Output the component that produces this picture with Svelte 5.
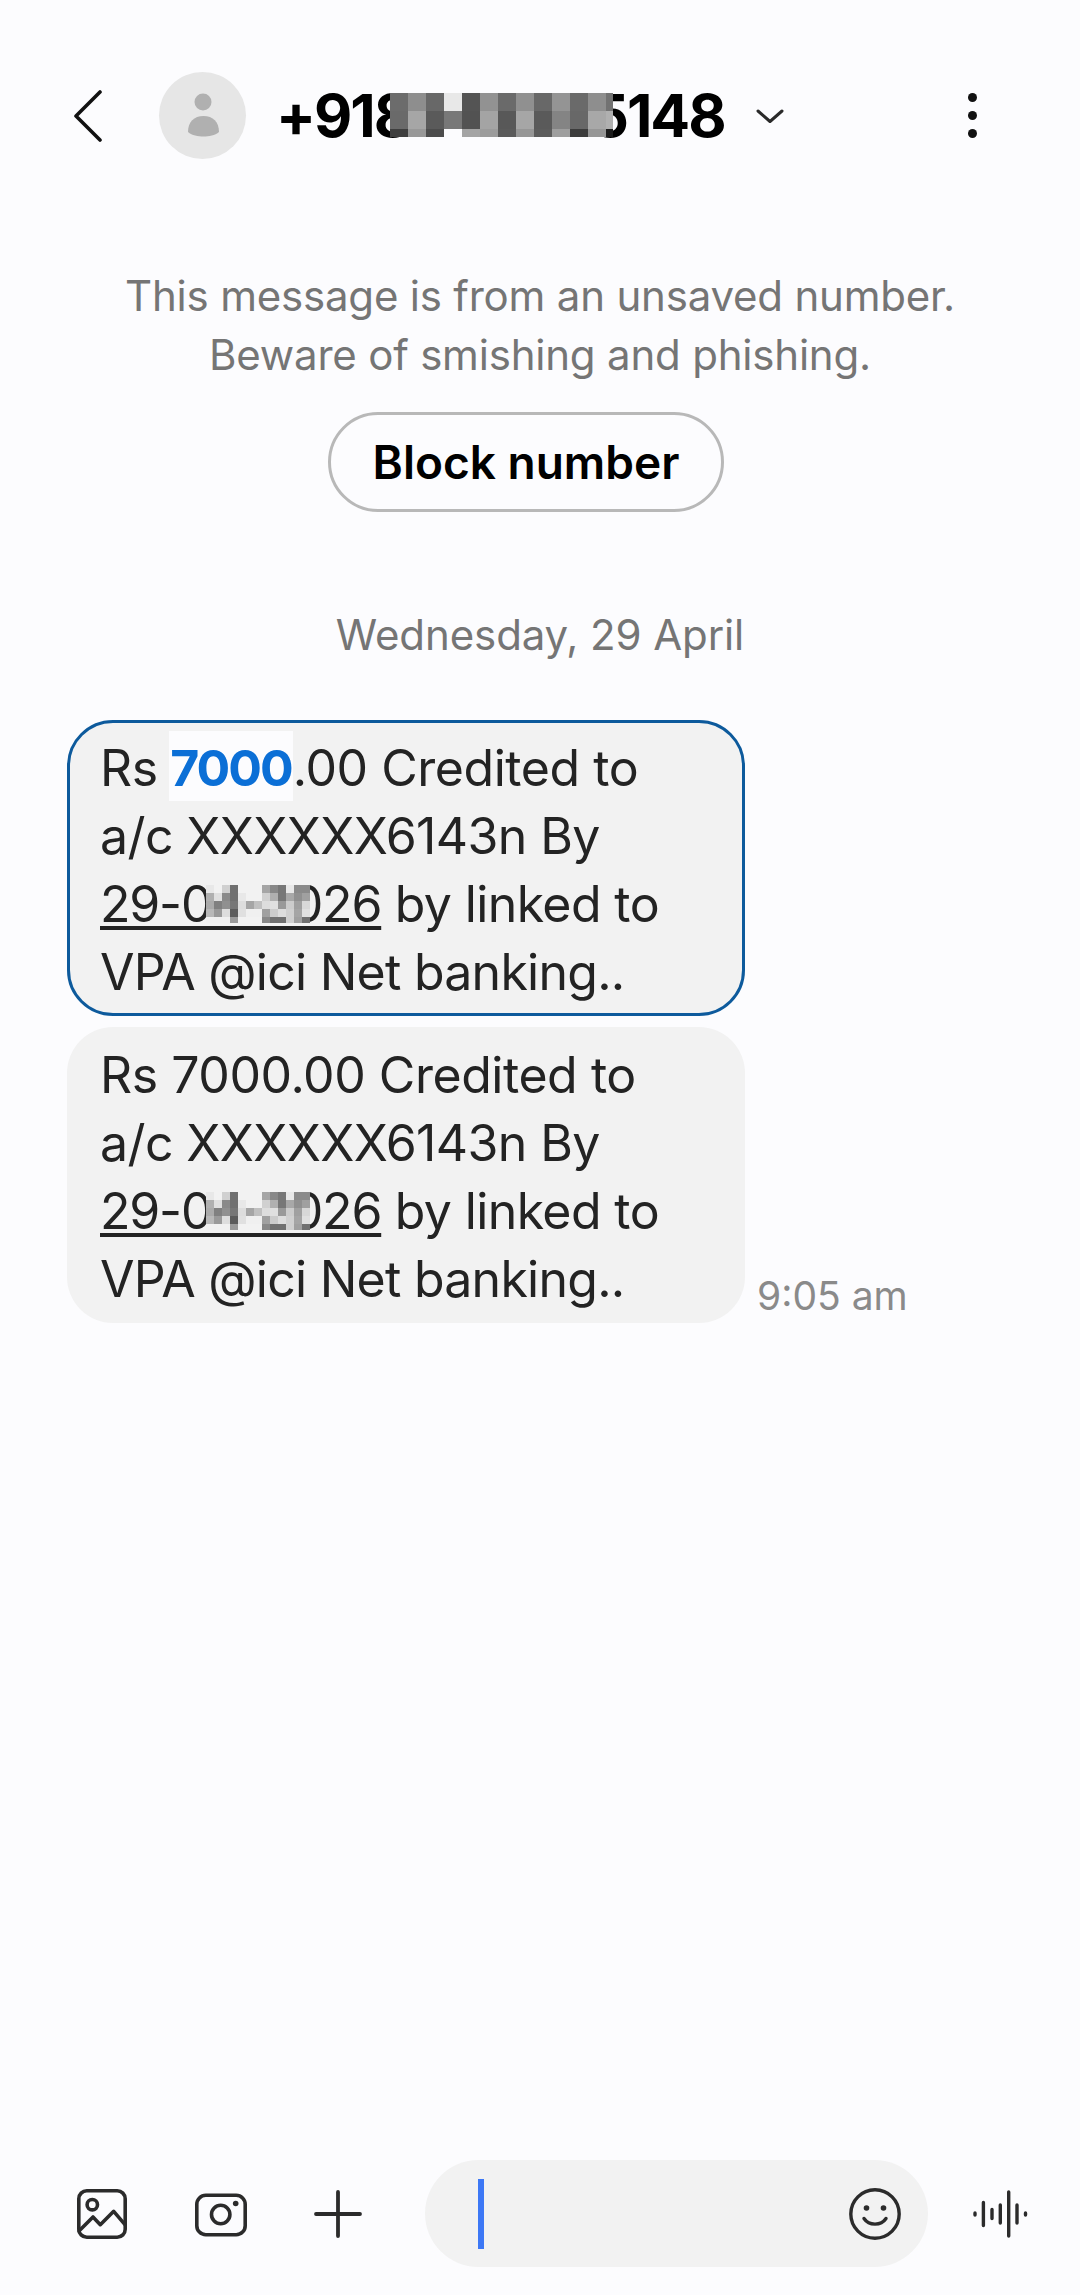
<script lang="ts">
  // greyscale pixelation blocks, one string per row
  const titleCells = [
    ['#6c6c6c', '#8e8e8e', '#686868', '#e8e8e8', '#545454', '#929292', '#6a6a6a', '#909090', '#686868', '#949494', '#6a6a6a', '#8e8e8e', '#727272'],
    ['#6a6a6a', '#a6a6a6', '#5a5a5a', '#787878', '#525252', '#a4a4a4', '#585858', '#a6a6a6', '#5a5a5a', '#848484', '#686868', '#a8a8a8', '#b0b0b0'],
    ['#3e3e3e', '#989898', '#4c4c4c', '#fcfcfe', '#a4a4a4', '#9c9c9c', '#5a5a5a', '#969696', '#5c5c5c', '#9e9e9e', '#3c3c3c', '#969696', '#1c1c1c'],
  ];

  const dateCells = [
    ['#e8e8e8', '#f2f2f2', '#d0d0d0', '#707070', '#f2f2f2', '#f2f2f2', '#f2f2f2', '#a5a5a5', '#888888', '#777777', '#e8e8e8', '#8a8a8a', '#8a8a8a'],
    ['#b0b0b0', '#e0e0e0', '#8a8a8a', '#707070', '#e8e8e8', '#f2f2f2', '#f2f2f2', '#d0d0d0', '#b0b0b0', '#777777', '#a8a8a8', '#909090', '#a0a0a0'],
    ['#aaaaaa', '#808080', '#909090', '#777777', '#dddddd', '#a5a5a5', '#c0c0c0', '#dddddd', '#e0e0e0', '#999999', '#cccccc', '#a0a0a0', '#d8d8d8'],
    ['#b8b8b8', '#999999', '#dddddd', '#5c5c5c', '#e0e0e0', '#f0f0f0', '#f0f0f0', '#a0a0a0', '#cccccc', '#dddddd', '#d0d0d0', '#a5a5a5', '#e0e0e0'],
    ['#f0f0f0', '#f0f0f0', '#f0f0f0', '#9a9a9a', '#f2f2f2', '#f2f2f2', '#f2f2f2', '#888888', '#707070', '#707070', '#d0d0d0', '#a0a0a0', '#707070'],
  ];

  const messages = [{ selected: true }, { selected: false }];
</script>

<div class="screen">
  <header class="topbar">
    <svg class="back" width="29" height="52" viewBox="0 0 29 52" fill="none" stroke="#111" stroke-width="3.6" stroke-linecap="round" stroke-linejoin="round">
      <path d="M27 2 L3 26 L27 50" />
    </svg>
    <div class="avatar">
      <svg width="87" height="87" viewBox="0 0 87 87">
        <circle cx="44" cy="30" r="8.5" fill="#b0b0b0" />
        <path d="M29 60 C29 50 35 44 44.500 44 C54 44 60 50 60 60 C56 63.500 50 64.500 44.500 64.500 C39 64.500 33 63.500 29 60Z" fill="#b0b0b0" />
      </svg>
    </div>
    <div class="title">
      +918<span class="hidden-digits"></span>5148
      <div class="title-mosaic">
        {#each titleCells.flat() as c}<i style="background:{c}"></i>{/each}
      </div>
    </div>
    <svg class="caret" width="28" height="14" viewBox="0 0 28 14" fill="none" stroke="#2a2a2a" stroke-width="3" stroke-linecap="round" stroke-linejoin="round">
      <path d="M2 2 L14 12.500 L26 2" />
    </svg>
    <div class="kebab"><span></span><span></span><span></span></div>
  </header>

  <main class="thread">
    <p class="notice">This message is from an unsaved number.<br />Beware of smishing and phishing.</p>
    <button class="block" type="button">Block number</button>
    <div class="date">Wednesday, 29 April</div>

    {#each messages as m}
      <div class="row">
        <div class="bubble" class:selected={m.selected}>
          <div class="first">Rs {#if m.selected}<span class="hit">7000</span>{:else}7000{/if}.00 Credited to</div>
          <div>a/c XXXXXX6143n By</div>
          <div>
            <span class="link">29-04-2026<span class="date-mosaic">{#each dateCells.flat() as c}<i style="background:{c}"></i>{/each}</span></span> by linked to
          </div>
          <div class="last">VPA @ici Net banking..</div>
        </div>
        {#if !m.selected}<span class="time">9:05 am</span>{/if}
      </div>
    {/each}
  </main>

  <footer class="composer">
    <svg class="ic" width="52" height="52" viewBox="0 0 52 52" fill="none" stroke="#2b2b2b" stroke-width="3.6" stroke-linecap="round" stroke-linejoin="round">
      <rect x="2.800" y="2.800" width="46.400" height="46.400" rx="8" />
      <circle cx="16.300" cy="16.700" r="5.200" />
      <path d="M3 43 L17 29 L24.300 36.700 L37.700 23.300 L49 36.700" />
    </svg>
    <svg class="ic cam" width="52" height="46" viewBox="0 0 52 46" fill="none" stroke="#2b2b2b" stroke-width="3.600">
      <rect x="1.800" y="4.300" width="48.400" height="39.400" rx="9" />
      <circle cx="25.700" cy="23.500" r="9.200" />
      <circle cx="40.700" cy="12.500" r="2.800" fill="#2b2b2b" stroke="none" />
    </svg>
    <svg class="ic plus" width="48" height="48" viewBox="0 0 48 48" fill="none" stroke="#2b2b2b" stroke-width="3.800" stroke-linecap="round">
      <path d="M24 2 V46 M2 24 H46" />
    </svg>
    <div class="input">
      <span class="cursor"></span>
      <svg width="52" height="52" viewBox="0 0 52 52" fill="none" stroke="#2b2b2b" stroke-width="3.400" stroke-linecap="round">
        <circle cx="26" cy="26" r="24.200" />
        <circle cx="17.500" cy="20" r="2.800" fill="#2b2b2b" stroke="none" />
        <circle cx="34.500" cy="20" r="2.800" fill="#2b2b2b" stroke="none" />
        <path d="M15 30.500 C20 38 32 38 37 30.500" />
      </svg>
    </div>
    <svg class="ic voice" width="56" height="50" viewBox="0 0 56 50" fill="none" stroke="#2b2b2b" stroke-width="3.400" stroke-linecap="round">
      <path d="M3 24 V26 M11.400 13.500 V36.500 M20 20.500 V29.500 M28.300 16 V34 M36.700 3 V47 M45 16 V34 M53.500 24 V26" />
    </svg>
  </footer>
</div>

<style>
  :global(body) {
    margin: 0;
    background: #fcfcfe;
  }

  .screen {
    display: flex;
    flex-direction: column;
    width: 1080px;
    height: 2295px;
    background: #fcfcfe;
    font-family: Inter, 'Noto Sans', sans-serif;
    color: #232323;
  }

  .topbar {
    display: flex;
    align-items: center;
    height: 87px;
    margin-top: 72px;
    padding: 0 103px 0 73px;
  }

  .back {
    flex-shrink: 0;
  }

  .avatar {
    width: 87px;
    height: 87px;
    margin-left: 57px;
    border-radius: 50%;
    background: #e6e6e6;
    flex-shrink: 0;
  }

  .avatar svg {
    display: block;
  }

  .title {
    position: relative;
    margin-left: 30px;
    font-size: 59px;
    line-height: 87px;
    font-weight: 700;
    color: #000;
    white-space: nowrap;
    letter-spacing: -2px;
  }

  .hidden-digits {
    display: inline-block;
    width: 181px;
  }

  .title-mosaic {
    position: absolute;
    left: 114px;
    top: 21px;
    display: grid;
    grid-template-columns: repeat(12, 18px) 6.700px;
    grid-template-rows: 18px 18px 8px;
  }

  .title-mosaic i,
  .date-mosaic i {
    display: block;
  }

  .caret {
    margin-left: 31px;
    flex-shrink: 0;
  }

  .kebab {
    display: flex;
    flex-direction: column;
    gap: 9px;
    margin-left: auto;
  }

  .kebab span {
    width: 9px;
    height: 9px;
    border-radius: 50%;
    background: #111;
  }

  .thread {
    display: flex;
    flex-direction: column;
    flex: 1;
  }

  .notice {
    margin: 107px 0 0;
    font-size: 42px;
    line-height: 59px;
    letter-spacing: -0.2px;
    color: #757575;
    text-align: center;
  }

  .block {
    align-self: flex-start;
    width: 396px;
    height: 100px;
    margin: 28px 0 0 328px;
    padding: 0;
    border: 3px solid #b8b8b8;
    border-radius: 50px;
    background: transparent;
    font-family: inherit;
    font-size: 46px;
    font-weight: 600;
    color: #000;
  }

  .date {
    margin-top: 93px;
    font-size: 42px;
    line-height: 60px;
    letter-spacing: -0.1px;
    color: #757575;
    text-align: center;
  }

  .row {
    display: flex;
    align-items: flex-end;
    margin: 11px 0 0 67px;
  }

  .date + .row {
    margin-top: 55px;
  }

  .bubble {
    box-sizing: border-box;
    width: 678px;
    height: 296px;
    padding: 14px 0 0 33px;
    border-radius: 46px;
    background: #f2f2f2;
    font-size: 50px;
    line-height: 68px;
    letter-spacing: -0.6px;
    white-space: nowrap;
  }

  .bubble.selected {
    border: 3px solid #0d5a9c;
    padding: 11px 0 0 30px;
  }

  .first {
    letter-spacing: -0.45px;
  }

  .last {
    letter-spacing: -0.75px;
  }

  .hit {
    display: inline-block;
    height: 67px;
    margin: -3px 0 0 -2px;
    padding: 3px 1px 0;
    background: #fcfcfe;
    color: #0b6fd6;
    font-weight: 700;
    line-height: 68px;
    letter-spacing: -2px;
    vertical-align: top;
  }

  .link {
    position: relative;
    letter-spacing: -1.2px;
    text-decoration: underline;
    text-decoration-thickness: 4px;
    text-underline-offset: 4px;
  }

  .date-mosaic {
    position: absolute;
    left: 106px;
    top: 11px;
    display: grid;
    grid-template-columns: repeat(13, 8px);
    grid-template-rows: repeat(4, 8px) 6px;
  }

  .time {
    margin: 0 0 4px 12px;
    font-size: 39px;
    line-height: 46px;
    color: #8a8a8a;
  }

  .composer {
    display: flex;
    align-items: center;
    height: 107px;
    margin-bottom: 28px;
    padding-left: 76px;
  }

  .ic {
    flex-shrink: 0;
  }

  .cam {
    margin-left: 67px;
  }

  .plus {
    margin-left: 67px;
  }

  .input {
    box-sizing: border-box;
    display: flex;
    align-items: center;
    justify-content: space-between;
    width: 503px;
    height: 107px;
    margin-left: 63px;
    padding: 0 27px 0 53px;
    border-radius: 54px;
    background: #f2f2f2;
  }

  .cursor {
    width: 6px;
    height: 70px;
    background: #3d78f5;
  }

  .voice {
    margin-left: 44px;
  }
</style>
